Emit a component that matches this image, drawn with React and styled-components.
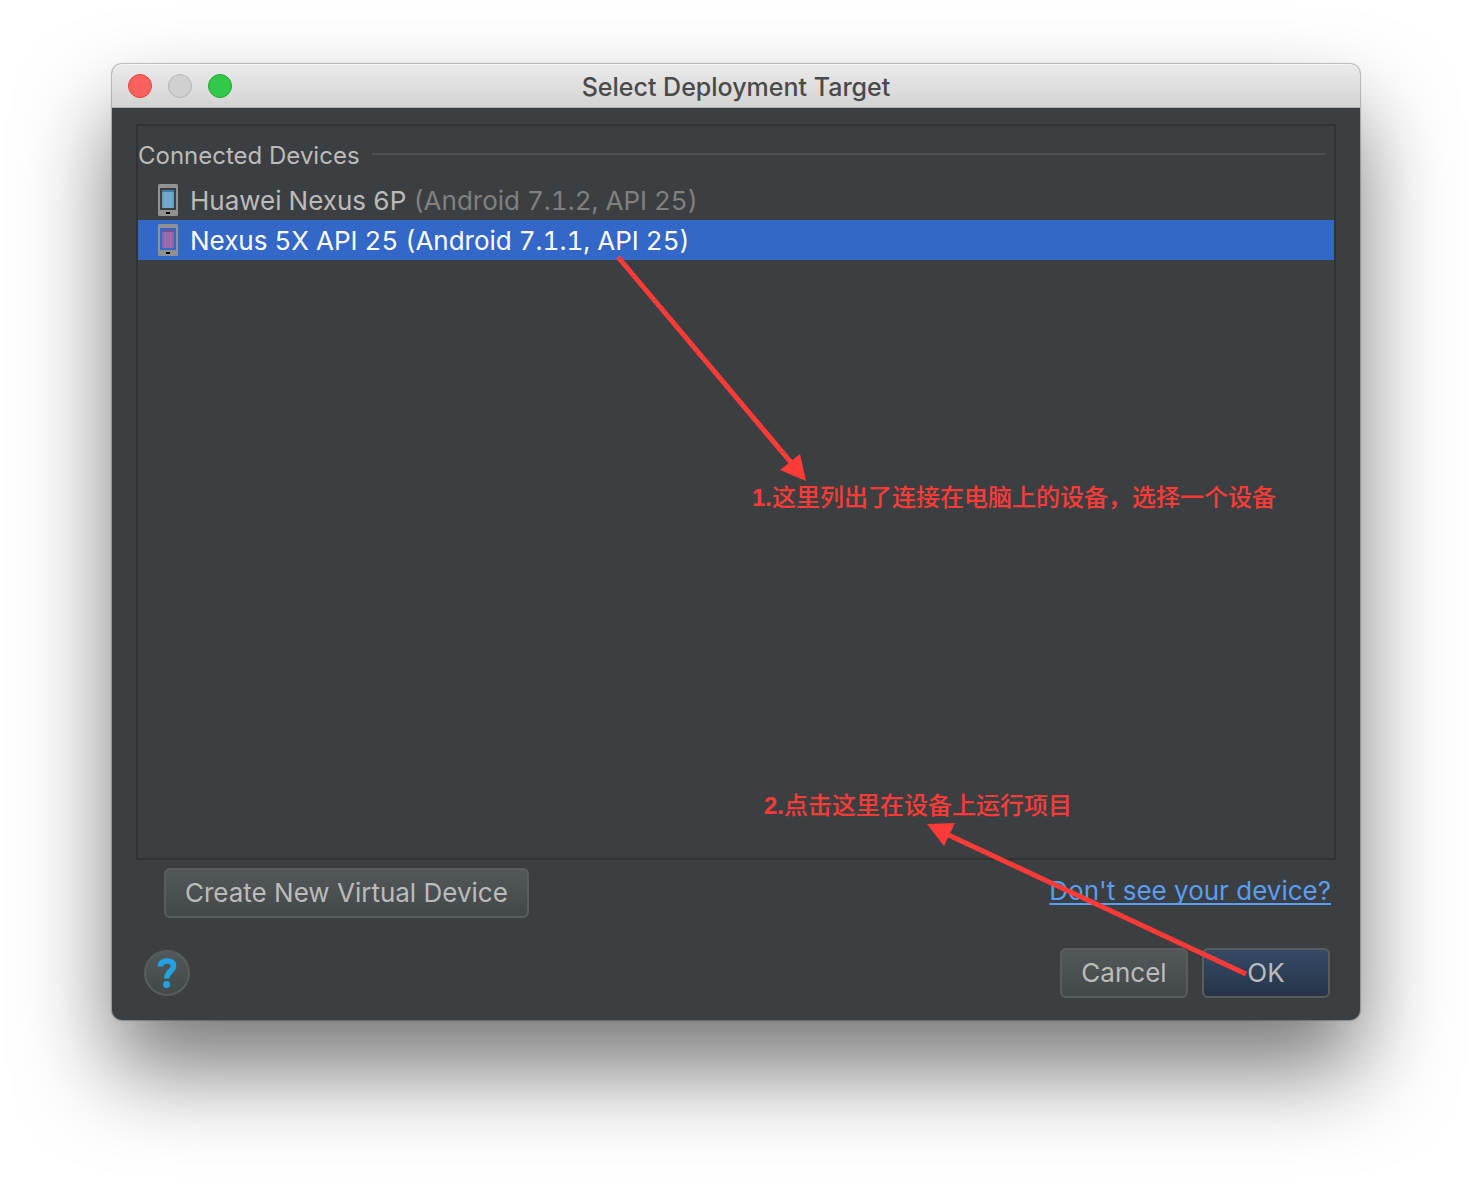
import React from 'react';
import styled, { createGlobalStyle } from 'styled-components';

const GlobalStyle = createGlobalStyle`
  * { box-sizing: border-box; }
  body {
    margin: 0;
    background: #fff;
    font-family: Inter, "Liberation Sans", sans-serif;
    font-size: 26px;
    line-height: 32px;
  }
`;

const Desktop = styled.main`
  display: flex;
  min-height: 100vh;
  padding: 64px 112px 160px;
  overflow: hidden;
`;

const Window = styled.section`
  position: relative;
  display: flex;
  flex: 1;
  flex-direction: column;
  min-width: 900px;
  border-radius: 10px;
  background: #3c3f41;
  box-shadow:
    0 0 1px 1px rgba(0, 0, 0, 0.24),
    0 50px 90px rgba(0, 0, 0, 0.53);
`;

const TitleBar = styled.header`
  display: grid;
  grid-template-columns: 1fr auto 1fr;
  align-items: center;
  height: 44px;
  padding: 0 16px;
  border-bottom: 1px solid #b2b2b2;
  border-radius: 10px 10px 0 0;
  background: linear-gradient(#ebebeb, #d3d3d3);
  box-shadow: inset 0 1px 0 #f6f6f6;
`;

const Title = styled.h1`
  margin: 0;
  padding-top: 2px;
  color: #4a4a4a;
  font-size: 25px;
  font-weight: 500;
  line-height: 32px;
`;

const Lights = styled.div`
  display: flex;
  gap: 16px;
`;

const Light = styled.button`
  width: 24px;
  height: 24px;
  padding: 0;
  border: 1px solid ${(p) => p.$edge};
  border-radius: 50%;
  background: ${(p) => p.$fill};
`;

const Body = styled.div`
  display: flex;
  flex: 1;
  flex-direction: column;
  padding: 16px 24px 22px;
`;

const DevicePanel = styled.section`
  flex: 1;
  min-height: 400px;
  border: 2px solid #323232;
`;

const GroupHeader = styled.div`
  display: flex;
  align-items: center;
  gap: 12px;
  height: 54px;
  padding: 2px 9px 0 0;

  &::after {
    content: "";
    flex: 1;
    height: 2px;
    background: #515151;
  }
`;

const GroupTitle = styled.h2`
  margin: 0;
  padding-top: 4px;
  color: #bbb;
  font-size: 24px;
  font-weight: 400;
  line-height: 32px;
`;

const DeviceList = styled.ul`
  margin: 0;
  padding: 0;
  list-style: none;
`;

const DeviceRow = styled.li`
  display: flex;
  align-items: center;
  gap: 12px;
  height: 40px;
  padding: 0 20px;
  color: ${(p) => (p.$selected ? '#fff' : '#bbb')};
  background: ${(p) => (p.$selected ? '#3367c8' : 'transparent')};
  font-variant-numeric: tabular-nums;
`;

const DeviceLabel = styled.span`
  padding-top: 2px;
`;

const DeviceDetail = styled.span`
  color: ${(p) => (p.$selected ? '#fff' : '#808080')};
`;

const ActionRow = styled.div`
  display: flex;
  justify-content: space-between;
  padding: 8px 5px 0 28px;
`;

const DialogRow = styled.footer`
  display: flex;
  align-items: center;
  gap: 14px;
  padding: 30px 6px 0 8px;
`;

const Button = styled.button`
  height: 50px;
  min-width: 128px;
  padding: 0 19px;
  border: 2px solid #5b5d5d;
  border-radius: 6px;
  color: #bbb;
  background: ${(p) =>
    p.$primary ? 'linear-gradient(#364a66, #263448)' : 'linear-gradient(#525759, #434849)'};
  font: inherit;
`;

const HelpButton = styled.button`
  display: grid;
  place-items: center;
  width: 46px;
  height: 46px;
  margin-right: auto;
  padding: 0;
  border: 2px solid #5b5d5d;
  border-radius: 50%;
  background: linear-gradient(#525759, #434849);
`;

const HelpLink = styled.a`
  align-self: center;
  height: 32px;
  margin-bottom: 4px;
  color: #589df6;
  text-decoration: underline;
  text-decoration-thickness: 2px;
  text-decoration-skip-ink: none;
  text-underline-offset: 3px;
`;

const Note = styled.p`
  position: absolute;
  margin: 0;
  color: #ff3b38;
  font-family: "Liberation Sans", "Noto Sans CJK SC", sans-serif;
  font-size: 24px;
  font-weight: 500;
  white-space: nowrap;
`;

const StepNumber = styled.strong`
  font-weight: 700;
`;

const SelectNote = styled(Note)`
  top: 418px;
  left: 640px;
`;

const RunNote = styled(Note)`
  right: 288px;
  bottom: 198px;
`;

const SelectArrow = styled.svg`
  position: absolute;
  top: 186px;
  left: 498px;
  pointer-events: none;
`;

const RunArrow = styled.svg`
  position: absolute;
  right: 110px;
  bottom: 40px;
  pointer-events: none;
`;

const PhoneIcon = ({ gap, edge, screen }) => (
  <svg width="20" height="32" viewBox="0 0 20 32" aria-hidden="true">
    <rect width="20" height="32" rx="1.5" fill="#919191" />
    <rect x="2" y="4" width="16" height="22" fill={gap} />
    <rect x="4" y="6" width="12" height="18" fill={screen} />
    <path d="M4 6h12v2H4z" fill={edge} />
    <path d="M4 8h2v16H4zM14 8h2v16h-2z" fill={edge} opacity="0.2" />
    <rect x="8" y="28" width="4" height="2" fill="#000" />
  </svg>
);

const devices = [
  {
    name: 'Huawei Nexus 6P',
    detail: '(Android 7.1.2, API 25)',
    icon: { gap: '#3c3f41', edge: '#3f7da5', screen: '#70a9c9' },
  },
  {
    name: 'Nexus 5X API 25',
    detail: '(Android 7.1.1, API 25)',
    icon: { gap: '#3367c8', edge: '#765096', screen: '#966cab' },
    selected: true,
  },
];

export default function App() {
  return (
    <>
      <GlobalStyle />
      <Desktop>
        <Window>
          <TitleBar>
            <Lights>
              <Light aria-label="Close" $fill="#fc625d" $edge="#e2443f" />
              <Light aria-label="Minimize" disabled $fill="#d0d0d0" $edge="#b4b4b4" />
              <Light aria-label="Zoom" $fill="#34c84a" $edge="#23a833" />
            </Lights>
            <Title>Select Deployment Target</Title>
          </TitleBar>
          <Body>
            <DevicePanel>
              <GroupHeader>
                <GroupTitle>Connected Devices</GroupTitle>
              </GroupHeader>
              <DeviceList>
                {devices.map((d) => (
                  <DeviceRow key={d.name} $selected={d.selected}>
                    <PhoneIcon {...d.icon} />
                    <DeviceLabel>
                      {d.name} <DeviceDetail $selected={d.selected}>{d.detail}</DeviceDetail>
                    </DeviceLabel>
                  </DeviceRow>
                ))}
              </DeviceList>
            </DevicePanel>
            <ActionRow>
              <Button>Create New Virtual Device</Button>
              <HelpLink href="#help">Don't see your device?</HelpLink>
            </ActionRow>
            <DialogRow>
              <HelpButton aria-label="Help">
                <svg width="20" height="32" viewBox="0 0 20 32" aria-hidden="true">
                  <path
                    d="M3.500 9.500C3.500 5.500 6 4 10.200 4C14.200 4 16.500 5.800 16.500 9C16.500 13.800 9.800 14.500 9.800 21.500"
                    fill="none"
                    stroke="#22a4e4"
                    strokeWidth="5.600"
                  />
                  <circle cx="9.600" cy="27.500" r="3.500" fill="#22a4e4" />
                </svg>
              </HelpButton>
              <Button>Cancel</Button>
              <Button $primary>OK</Button>
            </DialogRow>
          </Body>
          <SelectNote>
            <StepNumber>1.</StepNumber>这里列出了连接在电脑上的设备，选择一个设备
          </SelectNote>
          <RunNote>
            <StepNumber>2.</StepNumber>点击这里在设备上运行项目
          </RunNote>
          <SelectArrow width="200" height="236" viewBox="0 0 200 236" aria-hidden="true">
            <path d="M8 7L184 216" stroke="#ff3b38" strokeWidth="5" />
            <path d="M196 231L170 220L190 204Z" fill="#ff3b38" />
          </SelectArrow>
          <RunArrow width="330" height="166" viewBox="0 0 330 166" aria-hidden="true">
            <path d="M20 17L326 160" stroke="#ff3b38" strokeWidth="5" />
            <path d="M7 10L35 9L24 32Z" fill="#ff3b38" />
          </RunArrow>
        </Window>
      </Desktop>
    </>
  );
}
